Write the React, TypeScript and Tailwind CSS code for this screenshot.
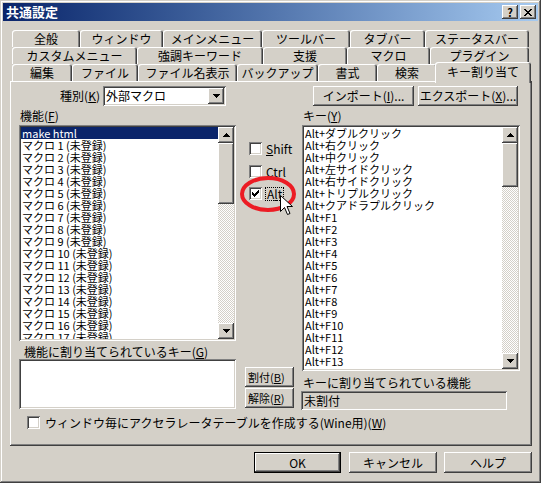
import React from "react";

const RAISED =
  "shadow-[inset_-1px_-1px_#404040,inset_1px_1px_#ffffff,inset_-2px_-2px_#808080]";
const SUNKEN =
  "shadow-[inset_1px_1px_#808080,inset_-1px_-1px_#ffffff,inset_2px_2px_#404040,inset_-2px_-2px_#d4d0c8]";

const tabRows = [
  [
    { t: "全般", w: "w-[68px]" },
    { t: "ウィンドウ", w: "w-[83px]" },
    { t: "メインメニュー", w: "w-[99px]" },
    { t: "ツールバー", w: "w-[88px]" },
    { t: "タブバー", w: "w-[75px]" },
    { t: "ステータスバー", w: "w-[104px]" },
  ],
  [
    { t: "カスタムメニュー", w: "w-[125px]" },
    { t: "強調キーワード", w: "w-[126px]" },
    { t: "支援", w: "w-[84px]" },
    { t: "マクロ", w: "w-[83px]" },
    { t: "プラグイン", w: "w-[99px]" },
  ],
  [
    { t: "編集", w: "w-[60px]" },
    { t: "ファイル", w: "w-[66px]" },
    { t: "ファイル名表示", w: "w-[99px]" },
    { t: "バックアップ", w: "w-[81px]" },
    { t: "書式", w: "w-[59px]" },
    { t: "検索", w: "w-[60px]" },
    { t: "キー割り当て", w: "w-[96px]", sel: true },
  ],
];

const macros = ["make html", ...Array.from({ length: 17 }, (_, i) => `マクロ ${i + 1} (未登録)`)];

const keys = [
  "Alt+ダブルクリック",
  "Alt+右クリック",
  "Alt+中クリック",
  "Alt+左サイドクリック",
  "Alt+右サイドクリック",
  "Alt+トリプルクリック",
  "Alt+クアドラプルクリック",
  ...Array.from({ length: 14 }, (_, i) => `Alt+F${i + 1}`),
];

const Arrow = ({ up }: { up?: boolean }) => (
  <svg width="7" height="4" viewBox="0 0 7 4" shapeRendering="crispEdges">
    {up ? (
      <path d="M3 0h1v1H3zM2 1h3v1H2zM1 2h5v1H1zM0 3h7v1H0z" fill="#000" />
    ) : (
      <path d="M0 0h7v1H0zM1 1h5v1H1zM2 2h3v1H2zM3 3h1v1H3z" fill="#000" />
    )}
  </svg>
);

const ArrowBtn = ({ up }: { up?: boolean }) => (
  <div className={`flex h-[16px] w-[16px] shrink-0 items-center justify-center bg-[#d4d0c8] ${RAISED}`}>
    <Arrow up={up} />
  </div>
);

const ScrollBar = ({ thumb }: { thumb: string }) => (
  <div className="flex w-[16px] shrink-0 flex-col">
    <ArrowBtn up />
    <div className="flex flex-1 flex-col bg-[image:repeating-conic-gradient(#d4d0c8_0%_25%,#ffffff_0%_50%)] bg-[length:2px_2px]">
      <div className={`w-[16px] bg-[#d4d0c8] ${RAISED} ${thumb}`} />
    </div>
    <ArrowBtn />
  </div>
);

const Check = () => (
  <svg width="7" height="7" viewBox="0 0 7 7" shapeRendering="crispEdges">
    <path
      d="M6 0h1v1H6zM5 1h2v1H5zM0 2h1v1H0zM4 2h3v1H4zM0 3h2v1H0zM3 3h3v1H3zM0 4h5v1H0zM1 5h3v1H1zM2 6h1v1H2z"
      fill="#000"
    />
  </svg>
);

const CheckBox = ({ checked }: { checked?: boolean }) => (
  <div className={`flex h-[13px] w-[13px] shrink-0 items-center justify-center bg-white ${SUNKEN}`}>
    {checked && <Check />}
  </div>
);

const Btn = ({ children, className = "" }: { children: React.ReactNode; className?: string }) => (
  <div className={`flex items-center bg-[#d4d0c8] whitespace-nowrap ${RAISED} ${className}`}>
    {children}
  </div>
);

const U = ({ children }: { children: React.ReactNode }) => (
  <span className="underline underline-offset-[1px]">{children}</span>
);

export default function App() {
  return (
    <div
      className={`relative flex h-[483px] w-[541px] select-none flex-col overflow-hidden bg-[#d4d0c8] p-[3px] font-['Noto_Sans_CJK_JP','Noto_Sans',sans-serif] text-[12px] leading-[14px] text-black shadow-[inset_-1px_-1px_#404040,inset_1px_1px_#d4d0c8,inset_-2px_-2px_#808080,inset_2px_2px_#ffffff]`}
    >
      {/* title bar */}
      <div className="flex h-[18px] shrink-0 items-center bg-gradient-to-r from-[#0a246a] to-[#a6caf0] pl-[3px] pr-[2px]">
        <span className="text-[13px] font-bold leading-[14px] text-white">共通設定</span>
        <div className="ml-auto flex gap-[2px]">
          <div className={`flex h-[14px] w-[16px] items-center justify-center bg-[#d4d0c8] text-[11px] font-bold leading-[11px] ${RAISED}`}>
            ?
          </div>
          <div className={`flex h-[14px] w-[16px] items-center justify-center bg-[#d4d0c8] ${RAISED}`}>
            <svg width="8" height="7" viewBox="0 0 8 7" shapeRendering="crispEdges">
              <path
                d="M0 0h2v1H0zM6 0h2v1H6zM1 1h2v1H1zM5 1h2v1H5zM2 2h4v1H2zM3 3h2v1H3zM2 4h4v1H2zM1 5h2v1H1zM5 5h2v1H5zM0 6h2v1H0zM6 6h2v1H6z"
                fill="#000"
              />
            </svg>
          </div>
        </div>
      </div>

      {/* tabs */}
      <div className="ml-[9px] mt-[9px] flex w-[517px] shrink-0 flex-col">
        {tabRows.map((row, ri) => (
          <div key={ri} className="flex h-[17px] items-start">
            {row.map((tab) =>
              tab.sel ? (
                <div
                  key={tab.t}
                  className={`relative z-10 -mx-[2px] -mt-[2px] flex h-[21px] items-center justify-center rounded-t-[3px] bg-[#d4d0c8] pb-[2px] shadow-[inset_1px_1px_#ffffff,inset_-1px_0_#404040,inset_-2px_0_#808080] ${tab.w}`}
                >
                  {tab.t}
                </div>
              ) : (
                <div
                  key={tab.t}
                  className={`flex h-[17px] items-center justify-center rounded-t-[3px] bg-[#d4d0c8] shadow-[inset_1px_1px_#ffffff,inset_-1px_0_#404040,inset_-2px_0_#808080] ${tab.w}`}
                >
                  {tab.t}
                </div>
              )
            )}
          </div>
        ))}
      </div>

      {/* panel */}
      <div className={`ml-[7px] flex h-[365px] w-[522px] shrink-0 flex-col pt-[5px] ${RAISED}`}>
        <div className="flex h-[20px] items-center">
          <div className="w-[93px] pr-[3px] text-right">
            種別(<U>K</U>)
          </div>
          <div className={`flex h-[20px] w-[123px] items-center bg-white p-[2px] ${SUNKEN}`}>
            <span className="flex-1 pl-[1px]">外部マクロ</span>
            <ArrowBtn />
          </div>
          <Btn className="ml-[87px] h-[20px] w-[101px] justify-center">
            インポート(<U>I</U>)...
          </Btn>
          <Btn className="ml-[4px] h-[20px] w-[100px] justify-center">
            エクスポート(<U>X</U>)...
          </Btn>
        </div>

        <div className="mt-[1px] flex">
          {/* left column */}
          <div className="ml-[9px] flex w-[217px] flex-col">
            <div className="h-[18px] pl-[1px] pt-[2px]">
              機能(<U>F</U>)
            </div>
            <div className={`flex h-[216px] bg-white p-[2px] ${SUNKEN}`}>
              <div className="flex-1 overflow-hidden text-[11px]">
                {macros.map((m, i) => (
                  <div
                    key={m}
                    className={`h-[12px] whitespace-nowrap pl-[1px] leading-[12px] ${i === 0 ? "bg-[#0a246a] text-white" : ""}`}
                  >
                    {m}
                  </div>
                ))}
              </div>
              <ScrollBar thumb="h-[61px]" />
            </div>
            <div className="h-[18px] whitespace-nowrap pl-[5px] pt-[4px]">
              機能に割り当てられているキー(<U>G</U>)
            </div>
            <div className={`h-[50px] bg-white ${SUNKEN}`} />
          </div>

          {/* middle column */}
          <div className="flex w-[66px] flex-col">
            <div className="ml-[13px] mt-[35px] flex h-[13px] items-center gap-[4px]">
              <CheckBox />
              <span>
                <U>S</U>hift
              </span>
            </div>
            <div className="ml-[13px] mt-[10px] flex h-[13px] items-center gap-[4px]">
              <CheckBox />
              <span>
                <U>C</U>trl
              </span>
            </div>
            <div className="ml-[13px] mt-[9px] flex h-[13px] items-center gap-[3px]">
              <CheckBox checked />
              <span className="border border-dotted border-black px-[1px] leading-[12px]">
                A<U>l</U>t
              </span>
            </div>
            <Btn className="ml-[9px] mt-[167px] h-[20px] w-[49px] pl-[3px] text-[11px]">
              割付(<U>B</U>)
            </Btn>
            <Btn className="ml-[9px] mt-[1px] h-[20px] w-[49px] pl-[3px] text-[11px]">
              解除(<U>R</U>)
            </Btn>
          </div>

          {/* right column */}
          <div className="flex w-[218px] flex-col">
            <div className="h-[18px] pl-[1px] pt-[2px]">
              キー(<U>Y</U>)
            </div>
            <div className={`flex h-[246px] bg-white p-[2px] ${SUNKEN}`}>
              <div className="flex-1 overflow-hidden text-[11px]">
                {keys.map((k) => (
                  <div key={k} className="h-[12px] whitespace-nowrap pl-[1px] leading-[12px]">
                    {k}
                  </div>
                ))}
              </div>
              <ScrollBar thumb="h-[44px]" />
            </div>
            <div className="h-[20px] whitespace-nowrap pl-[1px] pt-[5px]">キーに割り当てられている機能</div>
            <div className={`-ml-[1px] flex h-[19px] w-[206px] items-center bg-[#d4d0c8] px-[3px] ${SUNKEN}`}>
              未割付
            </div>
          </div>
        </div>

        <div className="ml-[17px] mt-[6px] flex h-[13px] items-center gap-[5px]">
          <CheckBox />
          <span className="whitespace-nowrap">
            ウィンドウ毎にアクセラレータテーブルを作成する(Wine用)(<U>W</U>)
          </span>
        </div>
      </div>

      {/* dialog buttons */}
      <div className="mr-[6px] mt-[6px] flex justify-end">
        <div className="h-[21px] w-[87px] border border-black">
          <Btn className="h-full w-full justify-center">OK</Btn>
        </div>
        <Btn className="ml-[8px] h-[21px] w-[88px] justify-center">キャンセル</Btn>
        <Btn className="ml-[7px] h-[21px] w-[88px] justify-center">ヘルプ</Btn>
      </div>

      {/* annotation overlay: red circle and mouse pointer */}
      <svg className="absolute left-[239px] top-[175px]" width="58" height="38" viewBox="0 0 58 38">
        <ellipse cx="29" cy="19" rx="26" ry="16" fill="none" stroke="#ec1c24" strokeWidth="4" />
      </svg>
      <svg className="absolute left-[280px] top-[195px]" width="14" height="21" viewBox="0 0 14 21">
        <path
          d="M0.5 0.5 L0.5 16.5 L4.5 12.5 L7.5 19.5 L10 18.5 L7 11.5 L12.5 11.5 Z"
          fill="#fff"
          stroke="#000"
          strokeWidth="1"
        />
      </svg>
    </div>
  );
}
